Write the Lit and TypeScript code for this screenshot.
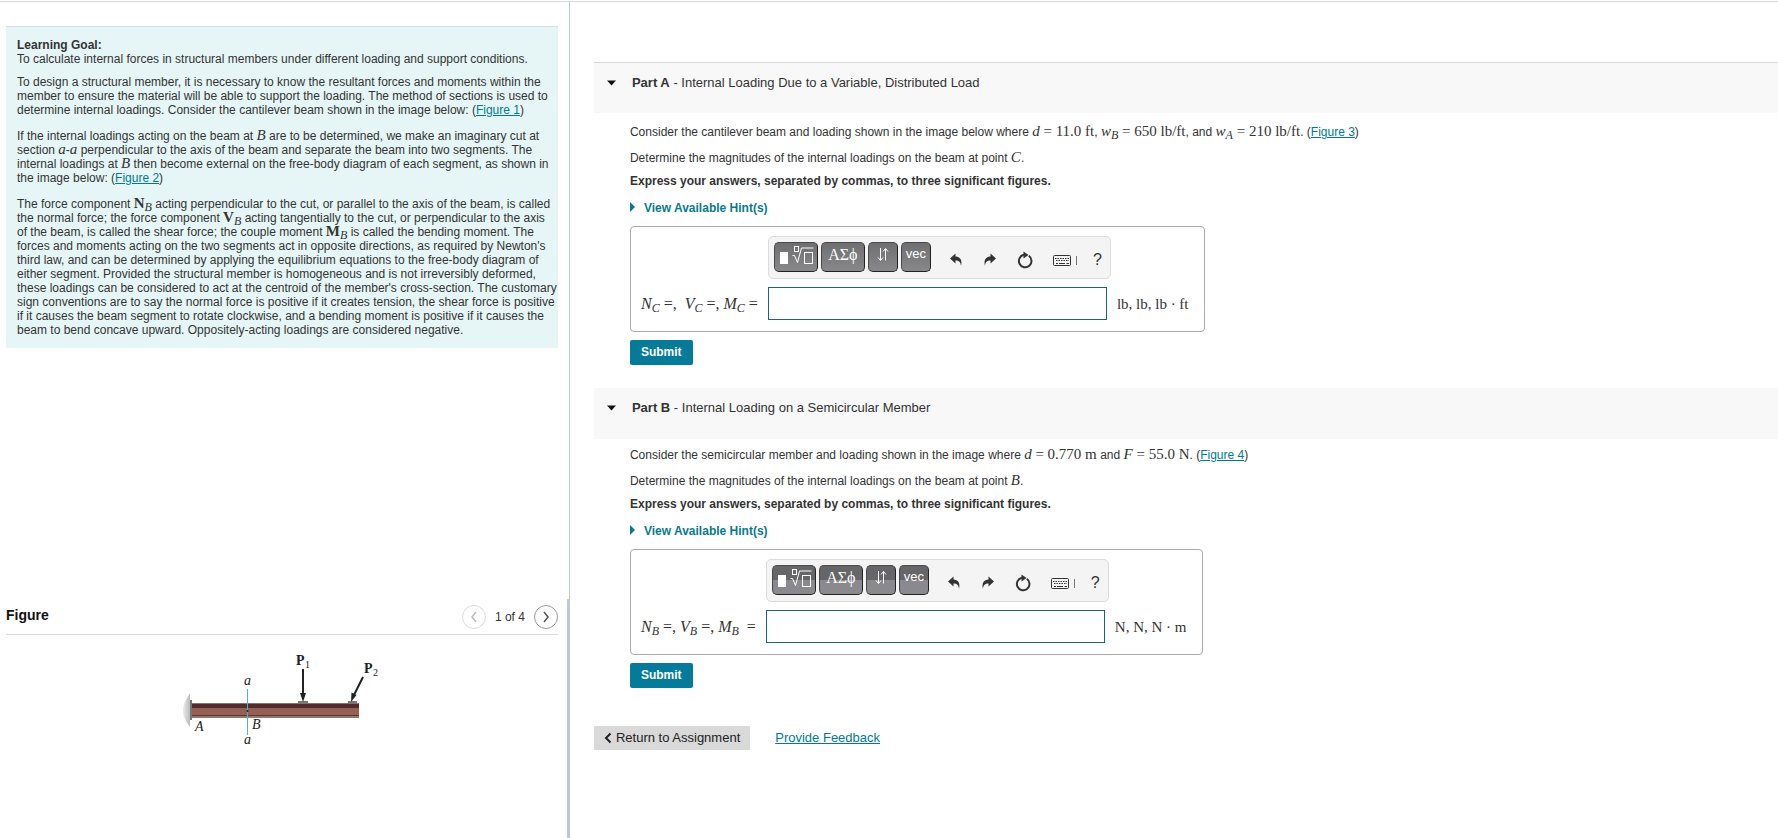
import { LitElement, html, css, svg, TemplateResult } from "lit";
import { customElement, property } from "lit/decorators.js";

interface Part {
  id: string;
  name: string;
  title: string;
  intro: TemplateResult;
  ask: TemplateResult;
  label: TemplateResult;
  units: string;
}

const v = (name: string, sub = "") =>
  html`<i class="var">${name}</i>${sub ? html`<sub class="sub">${sub}</sub>` : ""}`;
const bv = (name: string, sub: string) =>
  html`<b class="vec">${name}</b><sub class="sub">${sub}</sub>`;
const num = (text: string) => html`<span class="num">${text}</span>`;

const parts: Part[] = [
  {
    id: "a",
    name: "Part A",
    title: "Internal Loading Due to a Variable, Distributed Load",
    intro: html`Consider the cantilever beam and loading shown in the image below where
      ${v("d")}${num(" = 11.0 ft")}, ${v("w", "B")}${num(" = 650 lb/ft")}, and
      ${v("w", "A")}${num(" = 210 lb/ft")}. (<a class="link" href="#fig3">Figure 3</a>)`,
    ask: html`Determine the magnitudes of the internal loadings on the beam at point ${v("C")}.`,
    label: html`${v("N", "C")} =, &nbsp;${v("V", "C")} =, ${v("M", "C")} =`,
    units: "lb, lb, lb · ft",
  },
  {
    id: "b",
    name: "Part B",
    title: "Internal Loading on a Semicircular Member",
    intro: html`Consider the semicircular member and loading shown in the image where
      ${v("d")}${num(" = 0.770 m")} and ${v("F")}${num(" = 55.0 N")}.
      (<a class="link" href="#fig4">Figure 4</a>)`,
    ask: html`Determine the magnitudes of the internal loadings on the beam at point ${v("B")}.`,
    label: html`${v("N", "B")} =, ${v("V", "B")} =, ${v("M", "B")} &nbsp;=`,
    units: "N, N, N · m",
  },
];

@customElement("math-toolbar")
export class MathToolbar extends LitElement {
  @property({ type: Boolean }) glossy = false;

  static styles = css`
    :host {
      display: flex;
      align-items: flex-start;
      box-sizing: border-box;
      height: 43px;
      padding: 5px;
      background: #f4f4f4;
      border: 1px solid #dcdcdc;
      border-radius: 5px;
    }
    .keys {
      display: flex;
      gap: 3px;
    }
    .key {
      display: flex;
      justify-content: center;
      box-sizing: border-box;
      height: 30px;
      width: 44px;
      padding: 2px 0 0;
      margin: 0;
      color: #fff;
      background: linear-gradient(#6f6f71, #88888b);
      border: 1px solid #4a4a4c;
      border-right-color: #222;
      border-bottom: 1px solid #222;
      border-radius: 5px;
      font: 16px/20px "Liberation Serif", serif;
    }
    .glossy {
      background: linear-gradient(#666669 0 50%, #8a8a8e 50% 100%);
    }
    .narrow {
      width: 30px;
    }
    .word {
      font: 13px/17px "Liberation Sans", sans-serif;
    }
    .tools {
      display: flex;
      gap: 20px;
      align-items: center;
      height: 36px;
      padding-left: 18px;
    }
    .tool {
      display: flex;
      align-items: center;
      justify-content: center;
      padding: 0;
      border: 0;
      background: none;
      color: #333;
      font: 16px/20px "Liberation Sans", sans-serif;
    }
    .pair {
      display: flex;
      align-items: center;
      gap: 16px;
    }
  `;

  render() {
    const tone = this.glossy ? "glossy" : "";
    return html`
      <div class="keys">
        <button class="key ${tone}" aria-label="Templates">
          <svg width="36" height="22" viewBox="0 0 36 22" fill="none" stroke="#fff">
            <rect x="2" y="7" width="8" height="12" fill="#fff" stroke="none" />
            <rect x="16.5" y="1.5" width="4" height="5" />
            <path d="M14.500 10.500h2l3 7 4-14.500h12" />
            <rect x="26.500" y="7.500" width="8" height="11" />
          </svg>
        </button>
        <button class="key ${tone}">ΑΣϕ</button>
        <button class="key narrow ${tone}" aria-label="Arrows">
          <svg width="14" height="18" viewBox="0 0 14 18" fill="none" stroke="#fff">
            <path d="M4.500 3v12M2 12.500l2.500 3 2.500-3M9.500 15.500v-12M7 6.500l2.500-3 2.500 3" />
          </svg>
        </button>
        <button class="key narrow word ${tone}">vec</button>
      </div>
      <div class="tools">
        <button class="tool" aria-label="Undo">
          <svg width="14" height="14" viewBox="0 0 14 14" fill="#333">
            <path d="M1 5.500L6.500 0.500v3C11 3.500 13.500 7 12 13c-0.300-4-2-5.500-5.500-5.500v3z" />
          </svg>
        </button>
        <button class="tool" aria-label="Redo">
          <svg width="14" height="14" viewBox="0 0 14 14" fill="#333">
            <path d="M13 5.500L7.500 0.500v3C3 3.500 0.500 7 2 13c0.300-4 2-5.500 5.500-5.500v3z" />
          </svg>
        </button>
        <button class="tool" aria-label="Reset">
          <svg width="16" height="18" viewBox="0 0 16 18">
            <path d="M11.800 4.800A6.300 6.300 0 1 1 7 3.800" fill="none" stroke="#333" stroke-width="2" />
            <path d="M6.500 0.500l5 3.500-5 3.500z" fill="#333" />
          </svg>
        </button>
        <div class="pair">
          <button class="tool" aria-label="Keyboard shortcuts">
            <svg width="24" height="14" viewBox="0 0 24 14" fill="none" stroke="#333">
              <rect x="0.500" y="2.500" width="17" height="10" rx="1" />
              <path d="M2 5.500h14M3 7.500h13" stroke-dasharray="1.500 1" />
              <path d="M3 10.500h2M6 10.500h6M13.500 10.500h2.500" />
              <path d="M23.500 3v9" stroke="#777" />
            </svg>
          </button>
          <button class="tool" aria-label="Help">?</button>
        </div>
      </div>
    `;
  }
}

@customElement("beam-figure")
export class BeamFigure extends LitElement {
  static styles = css`
    :host {
      display: block;
    }
    .art {
      display: block;
    }
    .it {
      font: italic 14px "Liberation Serif", serif;
    }
    .load {
      font: bold 14px "Liberation Serif", serif;
    }
    .idx {
      font: 10px "Liberation Serif", serif;
    }
  `;

  render() {
    return html`<svg class="art" width="200" height="100" viewBox="0 0 200 100" fill="#222">
      <defs>
        <linearGradient id="wall"><stop offset="0" stop-color="#ececec" /><stop offset="1" stop-color="#bbb" /></linearGradient>
      </defs>
      <path d="M8 43C5 48 1 54 1 61s4 12 7 16z" fill="url(#wall)" />
      <rect x="8" y="50" width="2" height="20" fill="#777" />
      <rect x="10" y="53" width="167" height="15" fill="#945f54" />
      <rect x="10" y="53" width="167" height="1" fill="#86716d" />
      <rect x="10" y="54" width="167" height="4" fill="#552a2a" />
      <rect x="10" y="65" width="167" height="1" fill="#5f3530" />
      <rect x="10" y="66" width="167" height="2" fill="#92766f" />
      <rect x="116" y="51" width="10" height="2" fill="#777" />
      <rect x="166" y="51" width="9" height="2" fill="#777" />
      <path d="M65.500 39v46" stroke="#4db4cc" />
      <circle cx="65.500" cy="61" r="1" />
      <path d="M121 19v26M181 27l-9 18" stroke="#222" stroke-width="2" />
      <path d="M118 43h6l-3 9zM169 52l0.500-9.500 5 2.500z" />
      ${svg`<text class="it" x="62" y="35">a</text>
      <text class="it" x="62" y="94">a</text>
      <text class="it" x="13" y="81">A</text>
      <text class="it" x="70" y="79">B</text>
      <text class="load" x="114" y="15">P</text>
      <text class="idx" x="123" y="18">1</text>
      <text class="load" x="182" y="23">P</text>
      <text class="idx" x="191" y="26">2</text>`}
    </svg>`;
  }
}

@customElement("app-root")
export class AppRoot extends LitElement {
  static styles = css`
    :host {
      display: block;
      font: 12px/14px "Liberation Sans", Arial, sans-serif;
      color: #333;
      background: #fff;
    }
    .page {
      display: grid;
      grid-template-columns: 32% minmax(0, 1fr);
      box-sizing: border-box;
      min-height: 100vh;
      padding-top: 2px;
      background: linear-gradient(#d3d9da, #d3d9da) 0 1px / 100% 1px no-repeat;
    }
    .side {
      display: grid;
      grid-template-rows: 5fr 2fr;
      padding-left: 6px;
      background: #fff;
    }
    .scroll {
      padding: 24px 11px 0 0;
    }
    .goal {
      padding: 11px 0 11px 11px;
      background: #e6f6f6;
      border-top: 1px solid #cfe2e4;
    }
    .copy {
      margin: 0 0 12px;
    }
    .lead {
      margin-bottom: 9px;
    }
    .last {
      margin-bottom: 0;
    }
    .link {
      color: #007a94;
      text-decoration: underline;
    }
    .var,
    .vec,
    .num,
    .sub {
      font-family: "Liberation Serif", serif;
      line-height: 0;
    }
    .var,
    .num,
    .vec {
      font-size: 15px;
    }
    .label .var {
      font-size: 16px;
    }
    .num {
      white-space: pre;
    }
    .sub {
      font-size: 12px;
      font-style: italic;
      vertical-align: -3px;
    }
    .figure {
      padding-right: 9px;
      border-right: 2px solid #bccad4;
    }
    .fighead {
      display: flex;
      align-items: center;
      height: 35px;
      border-bottom: 1px solid #d8dcdd;
      margin-bottom: 15px;
    }
    .figtitle {
      flex: 1;
      margin: 0;
      padding-bottom: 4px;
      font-size: 14px;
      color: #111;
    }
    .pager {
      display: flex;
      align-items: center;
      gap: 9px;
    }
    .round {
      display: flex;
      align-items: center;
      justify-content: center;
      box-sizing: border-box;
      width: 24px;
      height: 24px;
      padding: 0;
      background: #fff;
      border: 1px solid #999;
      border-radius: 50%;
      color: #555;
    }
    .round:disabled {
      border-color: #ddd;
      color: #bbb;
    }
    .drawing {
      display: flex;
      justify-content: center;
    }
    .main {
      padding: 60px 0 0 24px;
      border-left: 1px solid #bccad0;
      background: #fff;
    }
    .part {
      margin-bottom: 23px;
    }
    .bar {
      display: flex;
      align-items: flex-start;
      gap: 16px;
      box-sizing: border-box;
      height: 51px;
      padding: 12px 13px;
      background: #f8f8f8;
      font-size: 13px;
      line-height: 16px;
    }
    .first {
      border-top: 1px solid #d8d8d8;
    }
    .caret {
      width: 9px;
      height: 16px;
    }
    .heading {
      margin: 0;
      font-size: 13px;
      font-weight: normal;
    }
    .body {
      padding: 8px 36px 0;
    }
    .first + .body {
      padding-top: 11px;
    }
    .line {
      margin: 0 0 9px;
      line-height: 17px;
    }
    .ask {
      margin-bottom: 6px;
    }
    .hint {
      display: flex;
      align-items: center;
      gap: 8px;
      margin: 0 0 9px;
      padding: 0;
      border: 0;
      background: none;
      color: #0a7a8c;
      font: bold 12px/18px "Liberation Sans", Arial, sans-serif;
    }
    .answer {
      display: inline-grid;
      grid-template-columns: auto 339px auto;
      column-gap: 10px;
      row-gap: 8px;
      align-items: center;
      box-sizing: border-box;
      padding: 9px 15px 11px 10px;
      border: 1px solid #aaa;
      border-radius: 4px;
      vertical-align: top;
    }
    .tools {
      grid-column: 2 / 4;
      width: 343px;
    }
    .label,
    .units {
      font: 16px/20px "Liberation Serif", serif;
      white-space: nowrap;
    }
    .units {
      font-size: 15px;
    }
    .field {
      box-sizing: border-box;
      width: 100%;
      height: 33px;
      padding: 0 6px;
      border: 1px solid #1d6476;
      border-radius: 0;
      background: #fff;
      font: 15px "Liberation Serif", serif;
    }
    .submit {
      display: block;
      height: 25px;
      margin-top: 8px;
      padding: 0 11px 2px;
      border: 0;
      border-radius: 2px;
      background: #067b99;
      color: #fff;
      font: bold 12px/20px "Liberation Sans", Arial, sans-serif;
    }
    .foot {
      display: flex;
      align-items: center;
      gap: 25px;
      padding-top: 15px;
      font-size: 13px;
    }
    .back {
      display: flex;
      align-items: center;
      gap: 4px;
      height: 24px;
      padding: 0 10px;
      border: 0;
      background: #d9d9d9;
      color: #222;
      font: 13px/20px "Liberation Sans", Arial, sans-serif;
    }
    .count {
      font-size: 12px;
    }
  `;

  private renderPart(p: Part, first: boolean) {
    return html`<section class="part">
      <header class="bar ${first ? "first" : ""}">
        <svg class="caret" viewBox="0 0 9 16" fill="#111"><path d="M0 5.500h9l-4.500 5z" /></svg>
        <h2 class="heading"><b>${p.name}</b> - ${p.title}</h2>
      </header>
      <div class="body">
        <p class="line">${p.intro}</p>
        <p class="line ask">${p.ask}</p>
        <p class="line"><b>Express your answers, separated by commas, to three significant figures.</b></p>
        <button class="hint">
          <svg width="6" height="12" viewBox="0 0 6 12" fill="#0a7a8c"><path d="M0 0l5 5-5 5z" /></svg>
          View Available Hint(s)
        </button>
        <div class="answer">
          <math-toolbar class="tools" ?glossy=${!first}></math-toolbar>
          <label class="label" for="answer-${p.id}">${p.label}</label>
          <input class="field" id="answer-${p.id}" type="text" />
          <span class="units">${p.units}</span>
        </div>
        <button class="submit">Submit</button>
      </div>
    </section>`;
  }

  render() {
    return html`<div class="page">
      <aside class="side">
        <div class="scroll">
          <div class="goal">
            <p class="copy lead"><b>Learning Goal:</b><br />To calculate internal forces in structural members under different loading and support conditions.</p>
            <p class="copy">To design a structural member, it is necessary to know the resultant forces and moments within the<br />
              member to ensure the material will be able to support the loading. The method of sections is used to<br />
              determine internal loadings. Consider the cantilever beam shown in the image below: (<a class="link" href="#fig1">Figure 1</a>)</p>
            <p class="copy">If the internal loadings acting on the beam at ${v("B")} are to be determined, we make an imaginary cut at<br />
              section ${v("a")}-${v("a")} perpendicular to the axis of the beam and separate the beam into two segments. The<br />
              internal loadings at ${v("B")} then become external on the free-body diagram of each segment, as shown in<br />
              the image below: (<a class="link" href="#fig2">Figure 2</a>)</p>
            <p class="copy last">The force component ${bv("N", "B")} acting perpendicular to the cut, or parallel to the axis of the beam, is called<br />
              the normal force; the force component ${bv("V", "B")} acting tangentially to the cut, or perpendicular to the axis<br />
              of the beam, is called the shear force; the couple moment ${bv("M", "B")} is called the bending moment. The<br />
              forces and moments acting on the two segments act in opposite directions, as required by Newton's<br />
              third law, and can be determined by applying the equilibrium equations to the free-body diagram of<br />
              either segment. Provided the structural member is homogeneous and is not irreversibly deformed,<br />
              these loadings can be considered to act at the centroid of the member's cross-section. The customary<br />
              sign conventions are to say the normal force is positive if it creates tension, the shear force is positive<br />
              if it causes the beam segment to rotate clockwise, and a bending moment is positive if it causes the<br />
              beam to bend concave upward. Oppositely-acting loadings are considered negative.</p>
          </div>
        </div>
        <div class="figure">
          <div class="fighead">
            <h2 class="figtitle">Figure</h2>
            <div class="pager">
              <button class="round" disabled aria-label="Previous figure">
                <svg width="8" height="12" viewBox="0 0 8 12" fill="none" stroke="currentColor" stroke-width="1.500"><path d="M6 1L2 6l4 5" /></svg>
              </button>
              <span class="count">1 of 4</span>
              <button class="round" aria-label="Next figure">
                <svg width="8" height="12" viewBox="0 0 8 12" fill="none" stroke="currentColor" stroke-width="1.500"><path d="M2 1l4 5-4 5" /></svg>
              </button>
            </div>
          </div>
          <div class="drawing"><beam-figure></beam-figure></div>
        </div>
      </aside>
      <main class="main">
        ${parts.map((p, i) => this.renderPart(p, i === 0))}
        <footer class="foot">
          <button class="back">
            <svg width="8" height="12" viewBox="0 0 8 12" fill="none" stroke="#222" stroke-width="2"><path d="M6.500 1.500L2 6l4.500 4.500" /></svg>
            Return to Assignment
          </button>
          <a class="link" href="#feedback">Provide Feedback</a>
        </footer>
      </main>
    </div>`;
  }
}
